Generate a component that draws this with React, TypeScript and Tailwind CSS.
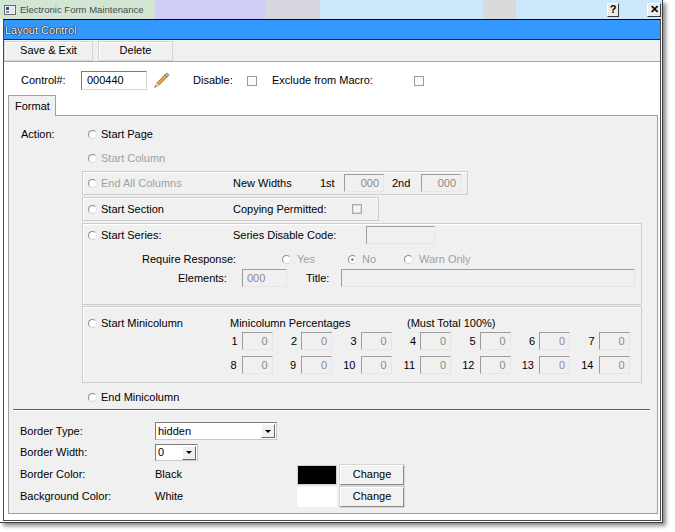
import React from 'react';

const Radio: React.FC<{ checked?: boolean }> = ({ checked }) => (
  <span className="relative inline-block w-[9px] h-[9px] shrink-0 rounded-full bg-white border border-[#8f8f8f] border-r-[#e4e4e4] border-b-[#d2d2d2]">
    {checked && <span className="absolute left-[2px] top-[2px] w-[3px] h-[3px] rounded-full bg-[#909090]" />}
  </span>
);

const Check: React.FC<{ disabled?: boolean }> = ({ disabled }) => (
  <span
    className={
      disabled
        ? 'inline-block w-[10px] h-[10px] shrink-0 border border-[#a8a8a8] bg-[#f4f4f4] shadow-[inset_0_0_0_1px_#dcdcdc]'
        : 'inline-block w-[10px] h-[10px] shrink-0 border border-[#9a9a9a] bg-[#fafafa]'
    }
  />
);

const Field: React.FC<{ className: string; value?: string; left?: boolean }> = ({ className, value, left }) => (
  <div
    className={`h-[18px] shrink-0 bg-[#f0f0f0] border border-t-[#9c9c9c] border-l-[#9c9c9c] border-r-[#e6e6e6] border-b-[#e6e6e6] flex items-center text-[#8a8a8a] ${
      left ? 'justify-start pl-[4px]' : 'justify-end pr-[4px]'
    } ${className}`}
  >
    {value}
  </div>
);

const Pencil = () => (
  <svg width="18" height="18" viewBox="0 0 18 18" className="shrink-0">
    <path d="M5.2 10.6 L13 2.8 L15.2 5 L7.4 12.8 Z" fill="#e9a33c" stroke="#8a5a1c" strokeWidth="0.7" />
    <path d="M13 2.8 L14.4 1.4 Q15.2 0.8 16 1.6 L16.6 2.2 Q17.2 3 16.6 3.6 L15.2 5 Z" fill="#b8a8a8" stroke="#6c6060" strokeWidth="0.6" />
    <path d="M5.2 10.6 L7.4 12.8 L2.6 15.4 Z" fill="#f3dcae" stroke="#8a6a3c" strokeWidth="0.5" />
    <path d="M3.6 13.8 L4.2 14.4 L2.6 15.4 Z" fill="#2a2a2a" />
  </svg>
);

const Select: React.FC<{ className: string; value: string }> = ({ className, value }) => (
  <div className={`h-full bg-white border border-[#7c7c7c] border-r-[#c8c8c8] border-b-[#c8c8c8] flex items-center pl-[2px] pr-[1px] ${className}`}>
    <span className="flex-1">{value}</span>
    <span className="w-[14px] h-[14px] bg-[#f0f0f0] border border-t-white border-l-white border-r-[#6a6a6a] border-b-[#6a6a6a] flex items-center justify-center">
      <span className="w-0 h-0 border-l-[3px] border-r-[3px] border-t-[3px] border-l-transparent border-r-transparent border-t-black" />
    </span>
  </div>
);

const WinBtn: React.FC<{ label: string; className: string }> = ({ label, className }) => (
  <div className={`h-[14px] bg-[#ececec] border border-t-white border-l-white border-r-[#3a3a3a] border-b-[#3a3a3a] flex items-center justify-center font-bold text-[11px] leading-none ${className}`}>
    {label}
  </div>
);

const mini1 = ['1', '2', '3', '4', '5', '6', '7'];
const mini2 = ['8', '9', '10', '11', '12', '13', '14'];

export default function App() {
  return (
    <div className="w-[675px] h-[532px] bg-white overflow-hidden font-['Liberation_Sans',Arial,sans-serif] text-[11px] text-black leading-none">
      <div className="w-[663px] h-[523px] bg-white border-r border-b border-[#3c3c3c] shadow-[3px_3px_4px_rgba(0,0,0,0.45)] flex flex-col">
        {/* title bar */}
        <div className="h-[19px] shrink-0 flex items-center pl-[4px] pr-[1px] bg-[linear-gradient(to_right,#d3e5d3_0,#d3e5d3_155px,#cdcdf6_155px,#cdcdf6_265px,#d6d6de_265px,#d6d6de_320px,#cbe9fa_320px,#cbe9fa_483px,#dadada_483px,#dadada_516px,#cbe9fa_516px)]">
          <svg width="12" height="10" viewBox="0 0 12 10" className="shrink-0">
            <rect x="0.5" y="0.5" width="11" height="9" fill="#f4f4f4" stroke="#6a6a6a" />
            <rect x="2" y="2" width="3" height="3" fill="#2f4f8f" />
            <rect x="2" y="6" width="3" height="2" fill="#7c8cac" />
            <rect x="6" y="2" width="4" height="6" fill="#dfe6ee" />
          </svg>
          <span className="ml-[4px] text-[9.5px] text-[#4a4a4a]">Electronic Form Maintenance</span>
          <div className="flex-1" />
          <WinBtn label="?" className="w-[12px]" />
          <WinBtn label="✕" className="ml-[28px] w-[14px]" />
        </div>

        {/* body */}
        <div className="ml-[3px] w-[658px] flex-1 mb-[1px] border border-[#4a4a4a] border-t-black flex flex-col bg-white">
          <div className="h-[20px] shrink-0 bg-[#3399ff] border-b border-[#2a2a2a] flex items-center pl-[1px] pt-px text-white [text-shadow:0_0_1px_#000,0_0_1px_#000,0_0_1px_#000]">
            Layout Control
          </div>
          <div className="h-[22px] shrink-0 bg-[#f0f0f0] border-b border-[#a8a8a8] flex items-center">
            <div className="w-[89px] h-[20px] flex items-center justify-center border border-[#d4d4d4] shadow-[inset_1px_1px_0_#fff]">Save &amp; Exit</div>
            <div className="ml-[5px] w-[75px] h-[20px] flex items-center justify-center border border-[#d4d4d4] shadow-[inset_1px_1px_0_#fff]">Delete</div>
          </div>

          {/* white content */}
          <div className="flex-1 flex flex-col">
            <div className="mt-[9px] h-[19px] flex items-center pl-[17px]">
              <span className="w-[60px]">Control#:</span>
              <div className="w-[66px] h-[19px] bg-white border border-t-[#7a7a7a] border-l-[#7a7a7a] border-r-[#d8d8d8] border-b-[#d8d8d8] flex items-center pl-[5px]">000440</div>
              <span className="ml-[5px]"><Pencil /></span>
              <span className="ml-[23px] w-[54px]">Disable:</span>
              <Check />
              <span className="ml-[15px] w-[142px]">Exclude from Macro:</span>
              <Check />
            </div>

            <div className="mt-[5px] ml-[4px] relative z-10 -mb-px w-[48px] h-[21px] bg-[#f0f0f0] border border-b-0 border-[#a0a0a0] flex items-center pl-[6px] pt-px">
              Format
            </div>

            {/* tab panel */}
            <div className="ml-[4px] w-[650px] h-[399px] bg-[#f0f0f0] border border-[#a0a0a0] flex flex-col">
              <div className="mt-[10px] h-[16px] flex items-center ml-[12px]">
                <span className="w-[67px]">Action:</span>
                <Radio />
                <span className="ml-[4px]">Start Page</span>
              </div>
              <div className="mt-[8px] h-[16px] flex items-center ml-[79px] text-[#a0a0a0]">
                <Radio />
                <span className="ml-[4px]">Start Column</span>
              </div>

              {/* End All Columns */}
              <div className="mt-[5px] ml-[73px] w-[386px] h-[24px] border border-[#cdcdcd] shadow-[inset_1px_1px_0_#fff] flex items-center pl-[5px]">
                <Radio />
                <span className="ml-[4px] w-[132px] text-[#a0a0a0]">End All Columns</span>
                <span className="w-[87px]">New Widths</span>
                <span className="w-[24px]">1st</span>
                <Field className="w-[40px]" value="000" />
                <span className="ml-[8px] w-[29px]">2nd</span>
                <Field className="w-[40px]" value="000" />
              </div>

              {/* Start Section */}
              <div className="mt-[2px] ml-[73px] w-[297px] h-[24px] border border-[#cdcdcd] shadow-[inset_1px_1px_0_#fff] flex items-center pl-[5px]">
                <Radio />
                <span className="ml-[4px] w-[132px]">Start Section</span>
                <span className="w-[119px]">Copying Permitted:</span>
                <Check disabled />
              </div>

              {/* Start Series */}
              <div className="mt-[2px] ml-[73px] w-[560px] h-[82px] border border-[#cdcdcd] shadow-[inset_1px_1px_0_#fff] flex flex-col">
                <div className="mt-[2px] h-[18px] flex items-center pl-[5px]">
                  <Radio />
                  <span className="ml-[4px] w-[132px]">Start Series:</span>
                  <span className="w-[133px]">Series Disable Code:</span>
                  <Field className="w-[69px]" />
                </div>
                <div className="mt-[7px] h-[16px] flex items-center pl-[59px]">
                  <span className="w-[140px]">Require Response:</span>
                  <div className="w-[66px] flex items-center text-[#a0a0a0]">
                    <Radio />
                    <span className="ml-[6px]">Yes</span>
                  </div>
                  <div className="w-[56px] flex items-center text-[#a0a0a0]">
                    <Radio checked />
                    <span className="ml-[5px]">No</span>
                  </div>
                  <div className="flex items-center text-[#a0a0a0]">
                    <Radio />
                    <span className="ml-[6px]">Warn Only</span>
                  </div>
                </div>
                <div className="mt-[2px] h-[18px] flex items-center pl-[95px]">
                  <span className="w-[64px]">Elements:</span>
                  <Field className="w-[45px]" value="000" left />
                  <span className="ml-[19px] w-[35px]">Title:</span>
                  <Field className="w-[294px]" />
                </div>
              </div>

              {/* Start Minicolumn */}
              <div className="mt-[1px] ml-[73px] w-[560px] h-[77px] border border-[#cdcdcd] shadow-[inset_1px_1px_0_#fff] flex flex-col">
                <div className="mt-[8px] h-[16px] flex items-center pl-[5px]">
                  <Radio />
                  <span className="ml-[4px] w-[129px]">Start Minicolumn</span>
                  <span className="w-[177px]">Minicolumn Percentages</span>
                  <span>(Must Total 100%)</span>
                </div>
                <div className="mt-[1px] h-[18px] flex items-center pl-[130px]">
                  {mini1.map((n) => (
                    <div key={n} className="w-[59.5px] flex items-center justify-end gap-[4px]">
                      <span>{n}</span>
                      <Field className="w-[31px]" value="0" />
                    </div>
                  ))}
                </div>
                <div className="mt-[6px] h-[18px] flex items-center pl-[130px]">
                  {mini2.map((n) => (
                    <div key={n} className="w-[59.5px] flex items-center justify-end gap-[5px]">
                      <span>{n}</span>
                      <Field className="w-[31px]" value="0" />
                    </div>
                  ))}
                </div>
              </div>

              <div className="mt-[6px] h-[16px] flex items-center ml-[79px]">
                <Radio />
                <span className="ml-[4px]">End Minicolumn</span>
              </div>

              <div className="mt-[4px] ml-[4px] w-[637px] h-[2px] border-t border-[#646464] border-b border-b-white" />

              <div className="mt-[11px] h-[18px] flex items-center ml-[11px]">
                <span className="w-[135px]">Border Type:</span>
                <Select className="w-[122px]" value="hidden" />
              </div>
              <div className="mt-[4px] h-[17px] flex items-center ml-[11px]">
                <span className="w-[135px]">Border Width:</span>
                <Select className="w-[43px]" value="0" />
              </div>
              <div className="mt-[3px] h-[21px] flex items-center ml-[11px]">
                <span className="w-[135px]">Border Color:</span>
                <span className="w-[142px]">Black</span>
                <span className="w-[40px] h-[20px] bg-black border border-[#cfcfcf]" />
                <div className="ml-[3px] w-[64px] h-[20px] bg-[#f2f2f2] border border-t-white border-l-white border-r-[#8a8a8a] border-b-[#8a8a8a] shadow-[0_0_0_1px_#d6d6d6] flex items-center justify-center">Change</div>
              </div>
              <div className="mt-[1px] h-[21px] flex items-center ml-[11px]">
                <span className="w-[135px]">Background Color:</span>
                <span className="w-[142px]">White</span>
                <span className="w-[40px] h-[20px] bg-white" />
                <div className="ml-[3px] w-[64px] h-[20px] bg-[#f2f2f2] border border-t-white border-l-white border-r-[#8a8a8a] border-b-[#8a8a8a] shadow-[0_0_0_1px_#d6d6d6] flex items-center justify-center">Change</div>
              </div>
            </div>
          </div>
        </div>
      </div>
    </div>
  );
}
